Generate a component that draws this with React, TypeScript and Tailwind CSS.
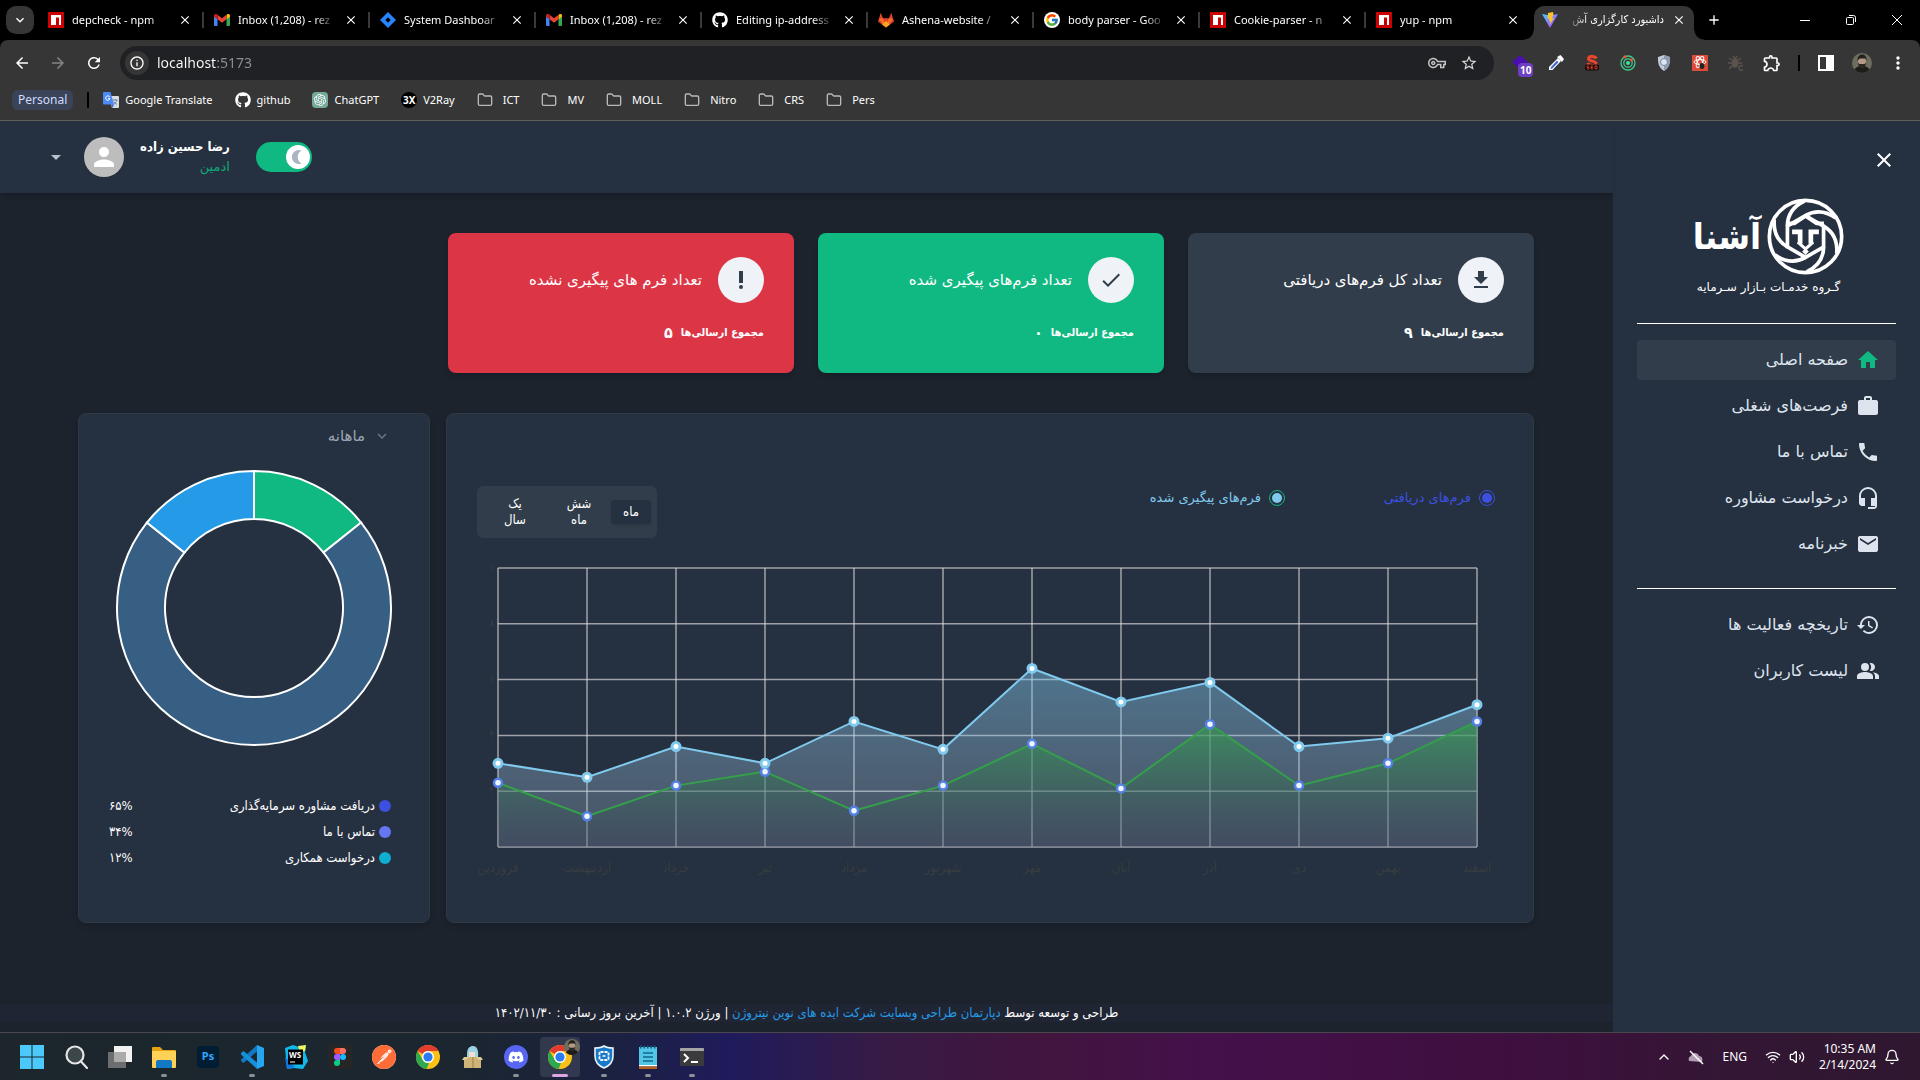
import React from "react";
import {
  MdHome, MdWork, MdPhone, MdHeadsetMic, MdEmail, MdHistory, MdPeopleAlt, MdDownload, MdCheck, MdPriorityHigh,
  MdPerson, MdClose, MdArrowDropDown, MdArrowBack, MdArrowForward, MdRefresh, MdInfoOutline, MdStarOutline,
  MdMoreVert, MdAdd, MdKeyboardArrowDown, MdOutlineExtension, MdOutlineVpnKey,
} from "react-icons/md";
import { FcGoogle } from "react-icons/fc";
import { FaGithub, FaDiscord } from "react-icons/fa6";
import { SiPostman, SiOpenai } from "react-icons/si";
import { Bell, ChevronUp, Folder, Volume2, Wifi } from "lucide-react";

const LATIN = "font-['Noto_Sans','Open_Sans',sans-serif]";
const PERSIAN = "font-['DejaVu_Sans_Condensed','DejaVu_Sans',sans-serif]";
const PERSIAN_WIDE = "font-['DejaVu_Sans',sans-serif]";

/* ---------- brand icons ---------- */

const Npm = () => (
  <svg viewBox="0 0 16 16" className="size-4">
    <rect width="16" height="16" fill="#cb0000" />
    <path d="M3 3h10v10h-2V5.500H8V13H3z" fill="#fff" />
  </svg>
);
const Gmail = () => (
  <svg viewBox="0 0 16 12" className="w-4">
    <path d="M0 1.500V11a1 1 0 0 0 1 1h2.500V4.800z" fill="#4285f4" />
    <path d="M12.500 12H15a1 1 0 0 0 1-1V1.500l-3.500 3.300z" fill="#34a853" />
    <path d="M12.500 1v4.300L16 2.700V1.500C16 .1 14.400-.5 13.300.3z" fill="#fbbc04" />
    <path d="M3.500 5.300V.7L8 4.200 12.500.7v4.600L8 8.700z" fill="#ea4335" />
    <path d="M0 1.500v1.200l3.500 2.600V.6L2.700.3C1.600-.5 0 .1 0 1.500z" fill="#c5221f" />
  </svg>
);
const Jira = () => (
  <svg viewBox="0 0 16 16" className="size-4">
    <path d="M8 0l8 8-8 8-8-8z" fill="#2684ff" />
    <path d="M8 5.300L10.700 8 8 10.700 5.300 8z" fill="#000" />
  </svg>
);
const Gitlab = () => (
  <svg viewBox="0 0 16 16" className="size-4">
    <path d="M8 15.500L0 9.500 2.800.8 5 6.200h6L13.200.8 16 9.500z" fill="#e24329" />
    <path d="M8 15.500L1 7l4-.8z" fill="#fc6d26" />
    <path d="M8 15.500L15 7l-4-.8z" fill="#fc6d26" />
    <path d="M8 15.500l-4-3.200L8 9l4 3.300z" fill="#fca326" />
  </svg>
);
const Vite = () => (
  <svg viewBox="0 0 16 16" className="size-4">
    <defs>
      <linearGradient id="vite" x1="0" y1="0" x2="1" y2="1">
        <stop offset="0" stopColor="#41d1ff" />
        <stop offset="1" stopColor="#bd34fe" />
      </linearGradient>
    </defs>
    <path d="M0 2l8 14 8-14-8 1.500z" fill="url(#vite)" />
    <path d="M11 0L6 1l-.4 6 2-.4L7 9.500l1.400-.4-.8 4L12 6l-2.300.4L11.500 3z" fill="#ffc524" />
  </svg>
);
const Translate = () => (
  <svg viewBox="0 0 16 16" className="size-4">
    <path d="M6 4h9a1 1 0 0 1 1 1v10a1 1 0 0 1-1 1H9z" fill="#d9dce1" />
    <path d="M9.500 8h5M12 7v1M14 8c-.5 2-2 3.500-3.500 4.300M10.500 9.500c1 1.500 2 2.300 3.500 3" stroke="#607d9b" strokeWidth=".9" fill="none" />
    <path d="M1 0h6.500L11 12.500H1a1 1 0 0 1-1-1V1a1 1 0 0 1 1-1z" fill="#4c8bf5" />
    <path d="M6.800 5A2.200 2.200 0 1 0 7 6.600H5" stroke="#fff" fill="none" />
    <path d="M8 12.500h3L9.500 16z" fill="#3367d6" />
  </svg>
);
const ChatGpt = () => (
  <span className="flex size-4 items-center justify-center rounded-sm bg-[#75a99c]">
    <SiOpenai className="size-3 text-white" />
  </span>
);
const V2Ray = () => (
  <span className="flex size-4 items-center justify-center rounded-full bg-black text-[10px] font-bold text-white">3X</span>
);

/* ---------- browser window ---------- */

const tabs: { title: string; icon: React.ReactNode }[] = [
  { title: "depcheck - npm", icon: <Npm /> },
  { title: "Inbox (1,208) - rez", icon: <Gmail /> },
  { title: "System Dashboar", icon: <Jira /> },
  { title: "Inbox (1,208) - rez", icon: <Gmail /> },
  { title: "Editing ip-address", icon: <FaGithub className="size-4 text-white" /> },
  { title: "Ashena-website /", icon: <Gitlab /> },
  { title: "body parser - Goo", icon: <span className="rounded-full bg-white p-px"><FcGoogle className="size-3.5" /></span> },
  { title: "Cookie-parser - n", icon: <Npm /> },
  { title: "yup - npm", icon: <Npm /> },
];

function TabStrip() {
  return (
    <div className="flex h-10 items-center bg-black text-white">
      <button aria-label="Search tabs" className="ml-1.5 mr-1 flex size-7 shrink-0 items-center justify-center rounded-[10px] bg-[#363636]">
        <MdKeyboardArrowDown className="size-4" />
      </button>
      {tabs.map((t, i) => (
        <div key={i} className="flex w-[166px] min-w-0 items-center pl-2.5">
          <span className="flex size-4 shrink-0 items-center justify-center">{t.icon}</span>
          <span className="ml-2 w-[98px] overflow-hidden whitespace-nowrap text-[11px] leading-4 [mask-image:linear-gradient(to_right,#000_78%,transparent)]">{t.title}</span>
          <button aria-label="Close tab" className="ml-auto mr-2.5 shrink-0">
            <MdClose className="size-3.5" />
          </button>
          <span className={i < 8 ? "h-4 w-0.5 shrink-0 bg-[#3a3a3a]" : "h-4 w-0.5 shrink-0"} />
        </div>
      ))}
      <div className="relative ml-0.5 flex h-[34px] w-40 items-center self-end rounded-t-[10px] bg-[#363636] px-2 pb-1.5">
        <span className="absolute -left-2.5 bottom-0 size-2.5 bg-[radial-gradient(circle_at_0_0,transparent_9px,#363636_10px)]" />
        <span className="absolute -right-2.5 bottom-0 size-2.5 bg-[radial-gradient(circle_at_100%_0,transparent_9px,#363636_10px)]" />
        <Vite />
        <span dir="rtl" className={`ml-2 w-[98px] overflow-hidden whitespace-nowrap text-[11px] leading-4 ${PERSIAN} [mask-image:linear-gradient(to_left,#000_78%,transparent)]`}>
          داشبورد کارگزاری آش
        </span>
        <button aria-label="Close tab" className="ml-auto">
          <MdClose className="size-3.5" />
        </button>
      </div>
      <button aria-label="New tab" className="ml-3">
        <MdAdd className="size-4" />
      </button>
      <div className="ml-auto flex items-center">
        <button aria-label="Minimize" className="flex w-[46px] justify-center"><span className="h-px w-2.5 bg-white" /></button>
        <button aria-label="Restore" className="flex w-[46px] justify-center">
          <svg viewBox="0 0 12 12" className="size-3" fill="none" stroke="#fff">
            <rect x="1.500" y="3.500" width="7" height="7" rx="1" />
            <path d="M4 1.500h4.500a2 2 0 0 1 2 2V8" />
          </svg>
        </button>
        <button aria-label="Close window" className="flex w-[46px] justify-center">
          <svg viewBox="0 0 12 12" className="size-3" stroke="#fff"><path d="M1 1l10 10M11 1L1 11" /></svg>
        </button>
      </div>
    </div>
  );
}

const extensions: React.ReactNode[] = [
  <span className="relative block size-4">
    <svg viewBox="0 0 16 16" className="size-4"><path d="M8 0l8 7-8 7-8-7z" fill="#4a0fae" /></svg>
    <span className="absolute left-1.5 top-2 rounded bg-[#6d3fc4] px-0.5 text-[10px] font-bold leading-[14px] text-white">10</span>
  </span>,
  <svg viewBox="0 0 16 16" className="size-4">
    <path d="M10 3l3 3-8.500 9H1v-3z" fill="#fff" />
    <path d="M9 5.500L3 12l-.5 2 1.500-.3 6.500-6.500z" fill="#4169d8" />
    <path d="M9 2l5 5 2-3-3.500-4z" fill="#fff" />
  </svg>,
  <svg viewBox="0 0 16 16" className="size-4">
    <path d="M12.500 3.500C11 1 5 .5 4.500 3.500c-.3 3 7.500 2 7.500 5S5 11 3.500 8" stroke="#e8452c" strokeWidth="3" fill="none" />
    <rect y="9.500" x="1" width="14" height="6" rx="2" fill="#120b09" />
    <path d="M5 11H3v1.500h2V14H3M9 11H7v3h2M7 12.500h2M11 11h2v3h-2z" stroke="#e8452c" strokeWidth=".8" fill="none" />
  </svg>,
  <svg viewBox="0 0 16 16" className="size-4" fill="none">
    <circle cx="8" cy="8" r="7" stroke="#3fc98d" strokeWidth="1.300" />
    <circle cx="8" cy="8" r="4.200" stroke="#3fc98d" strokeWidth="1.300" />
    <circle cx="8" cy="8" r="2" fill="#3fe0a0" />
    <circle cx="5" cy="1.800" r="1.600" fill="#f0562c" />
    <circle cx="11.500" cy="5" r="1.500" fill="#f0562c" />
  </svg>,
  <svg viewBox="0 0 16 16" className="size-4">
    <path d="M8 0l6 2c.4 6-1 11-6 14C3 13 1.600 8 2 2z" fill="#c3cbd9" />
    <path d="M8 0l6 2c.4 6-1 11-6 14z" fill="#8f9bb3" />
    <circle cx="8" cy="7" r="3.500" fill="#dfe5ef" stroke="#7987a3" />
  </svg>,
  <svg viewBox="0 0 16 16" className="size-4">
    <rect width="16" height="16" fill="#dd4b39" />
    <g fill="none" stroke="#fff">
      <ellipse cx="8" cy="7" rx="6" ry="2.400" />
      <ellipse cx="8" cy="7" rx="6" ry="2.400" transform="rotate(60 8 7)" />
      <ellipse cx="8" cy="7" rx="6" ry="2.400" transform="rotate(120 8 7)" />
    </g>
    <ellipse cx="10" cy="11" rx="2.500" ry="3" fill="#222" />
  </svg>,
  <svg viewBox="0 0 16 16" className="size-4" fill="none" stroke="#5c534d" strokeWidth="1.400">
    <ellipse cx="7" cy="8" rx="2.500" ry="4" fill="#5c534d" />
    <path d="M1 3l4 3M13 3L9 6M0 8h14M1 14l4-4M5 1l2 3 2-3" />
    <path d="M15 11c-3-1.500-4.500.5-4 2.500s3 2.500 4 1" />
  </svg>,
  <MdOutlineExtension className="size-5 text-white" />,
];

const bookmarks: { label: string; icon?: React.ReactNode }[] = [
  { label: "Google Translate", icon: <Translate /> },
  { label: "github", icon: <FaGithub className="size-4 text-white" /> },
  { label: "ChatGPT", icon: <ChatGpt /> },
  { label: "V2Ray", icon: <V2Ray /> },
  { label: "ICT" }, { label: "MV" }, { label: "MOLL" }, { label: "Nitro" }, { label: "CRS" }, { label: "Pers" },
];

function Toolbar() {
  return (
    <div className="bg-black">
      <div className="rounded-t-lg border-b border-[#5f5f5a] bg-[#363636] text-white">
        <div className="flex h-[46px] items-center pl-1 pr-1">
          <button aria-label="Back" className="flex w-9 justify-center"><MdArrowBack className="size-[18px]" /></button>
          <button aria-label="Forward" className="flex w-9 justify-center text-[#858585]"><MdArrowForward className="size-[18px]" /></button>
          <button aria-label="Reload" className="flex w-9 justify-center"><MdRefresh className="size-[18px]" /></button>
          <div className="ml-2 flex h-[34px] flex-1 items-center rounded-full bg-[#202124] pl-[5px] pr-4">
            <span className="flex size-6 items-center justify-center rounded-full bg-[#363636]">
              <MdInfoOutline className="size-4" />
            </span>
            <input
              aria-label="Address"
              defaultValue="localhost:5173"
              className="ml-2 flex-1 bg-[linear-gradient(to_right,#ffffff_60px,#8d9196_60px)] bg-clip-text text-sm text-transparent outline-none"
            />
            <MdOutlineVpnKey className="mr-3.5 size-[18px] text-[#c4c4c4]" />
            <MdStarOutline className="size-[18px] text-[#d8d8d8]" />
          </div>
          <div className="ml-2 flex items-center">
            {extensions.map((e, i) => (
              <span key={i} className="flex w-9 justify-center">{e}</span>
            ))}
            <span className="mx-2 h-4 w-0.5 bg-black" />
            <button aria-label="Side panel" className="flex w-9 justify-center">
              <span className="flex h-4 w-4 justify-end border-2 border-white"><span className="w-1.5 bg-white" /></span>
            </button>
            <span className="flex w-9 justify-center"><PhotoAvatar className="size-5" /></span>
            <button aria-label="Menu" className="flex w-9 justify-center"><MdMoreVert className="size-5" /></button>
          </div>
        </div>
        <div className="flex h-[34px] items-start pl-3 text-[11px]">
          <a href="#personal" className="mt-1 flex h-5 items-center rounded-md bg-[#3b4358] px-1.5 text-xs text-[#cfdcff]">Personal</a>
          <span className="ml-3.5 mt-1.5 h-4 w-0.5 bg-black" />
          <nav className="ml-3.5 mt-1 flex h-5 items-center gap-[22px]">
            {bookmarks.map((b) => (
              <a key={b.label} href="#bookmark" className="flex items-center gap-1.5">
                {b.icon ?? <Folder className="mr-1 size-4 text-[#b9b9b9]" />}
                {b.label}
              </a>
            ))}
          </nav>
        </div>
      </div>
    </div>
  );
}

function PhotoAvatar({ className }: { className: string }) {
  return (
    <svg viewBox="0 0 20 20" className={`rounded-full ${className}`}>
      <rect width="20" height="20" fill="#6f6d60" />
      <path d="M2 20c0-5 3-7 8-7s8 2 8 7z" fill="#1d1c18" />
      <ellipse cx="10" cy="8.500" rx="4" ry="5" fill="#b39a86" />
      <path d="M5.500 8C5 3 8 1.500 10.500 1.500S15 4 14.500 8l-1-2.500h-6z" fill="#24211c" />
      <path d="M6 9.500c.5 5 2 6 4 6s3.500-1 4-6l-1.500 1.500h-5z" fill="#2c2721" />
    </svg>
  );
}

/* ---------- dashboard ---------- */

const blades = [0, 60, 120, 180, 240, 300];

function Logo() {
  return (
    <div className="flex flex-col items-center pl-1 text-white">
      <div className="flex items-center gap-1.5">
        <svg viewBox="0 0 230 230" className="size-[77px]" fill="none" stroke="#fff" strokeWidth="11">
          <circle cx="115" cy="115" r="108" />
          {blades.map((a) => (
            <path key={a} d="M61 150V84C61 52 76 26 112 9" transform={`rotate(${a} 115 115)`} />
          ))}
          <path d="M60 76h22l33-22 33 22h22" />
          <path d="M75 101h24v36M155 101h-24v36" strokeWidth="14" />
          <path d="M92 132l23 20 23-20" strokeWidth="9" />
          <path d="M115 150l10 10-10 10-10-10z" fill="#fff" stroke="none" />
        </svg>
        <span className={`text-[36px] font-bold leading-[48px] ${PERSIAN}`}>آشنا</span>
      </div>
      <p className={`mt-0.5 text-xs leading-5 ${PERSIAN_WIDE}`}>گـروه خدمـات بـازار سـرمایه</p>
    </div>
  );
}

const primaryNav = [
  { label: "صفحه اصلی", Icon: MdHome, active: true },
  { label: "فرصت‌های شغلی", Icon: MdWork },
  { label: "تماس با ما", Icon: MdPhone },
  { label: "درخواست مشاوره", Icon: MdHeadsetMic },
  { label: "خبرنامه", Icon: MdEmail },
];
const secondaryNav = [
  { label: "تاریخچه فعالیت ها", Icon: MdHistory },
  { label: "لیست کاربران", Icon: MdPeopleAlt },
];

function NavList({ items }: { items: { label: string; Icon: React.ComponentType<{ className?: string }>; active?: boolean }[] }) {
  return (
    <ul className={`flex flex-col gap-1.5 ${PERSIAN_WIDE}`}>
      {items.map(({ label, Icon, active }) => (
        <li key={label}>
          <a
            href="#page"
            className={
              active
                ? "flex h-10 items-center gap-2 rounded-sm bg-[#313d4a] px-4 text-base text-[#dee4ee]"
                : "flex h-10 items-center gap-2 rounded-sm px-4 text-base text-[#dee4ee]"
            }
          >
            <Icon className={active ? "size-6 text-[#10b981]" : "size-6"} />
            {label}
          </a>
        </li>
      ))}
    </ul>
  );
}

function Sidebar() {
  return (
    <aside className="w-[307px] shrink-0 bg-[#253040] px-6">
      <div className="flex h-[77px] items-start pt-[27px]">
        <button aria-label="بستن منو" className="text-white"><MdClose className="size-6" /></button>
      </div>
      <Logo />
      <hr className="mb-4 mt-[26px] border-white" />
      <NavList items={primaryNav} />
      <hr className="mb-4 mt-6 border-white" />
      <NavList items={secondaryNav} />
    </aside>
  );
}

function Header() {
  return (
    <header className="z-10 flex h-[72px] items-center justify-end bg-[#253040] pl-11 shadow-md">
      <label className="ml-[26px] flex h-[30px] w-14 cursor-pointer items-center rounded-full bg-[#10b981] px-0.5">
        <input type="checkbox" defaultChecked aria-label="حالت تاریک" className="sr-only" />
        <span className="flex size-6 items-center justify-center rounded-full bg-white">
          <svg viewBox="0 0 16 16" className="size-4"><path d="M11.500 1.500a7 7 0 1 0 0 13 7.500 7.500 0 0 1 0-13z" fill="#aab4c3" /></svg>
        </span>
      </label>
      <div className="ml-4 text-right">
        <p className="text-[13px] font-bold leading-5 text-white">رضا حسین زاده</p>
        <p className={`text-[13px] leading-5 text-[#10a778] ${PERSIAN_WIDE}`}>ادمین</p>
      </div>
      <span className="flex size-10 items-center justify-center rounded-full bg-[#bdbdbd]"><MdPerson className="size-[30px] text-white" /></span>
      <button aria-label="حساب کاربری" className="mr-4 text-[#b8c0cc]"><MdArrowDropDown className="size-6" /></button>
    </header>
  );
}

const stats = [
  { title: "تعداد کل فرم‌های دریافتی", value: "۹", Icon: MdDownload, tone: "bg-[#313d4a]" },
  { title: "تعداد فرم‌های پیگیری شده", value: "۰", Icon: MdCheck, tone: "bg-[#10b981]" },
  { title: "تعداد فرم های پیگیری نشده", value: "۵", Icon: MdPriorityHigh, tone: "bg-[#dc3545]" },
];

function StatCard({ title, value, Icon, tone }: (typeof stats)[number]) {
  return (
    <article className={`h-[140px] rounded-lg px-[30px] pt-6 text-white shadow-md ${tone}`}>
      <div className="flex items-center gap-4">
        <span className="flex size-[46px] items-center justify-center rounded-full bg-[#eff2f7]"><Icon className="size-6 text-[#313d4a]" /></span>
        <h4 className={`text-[15px] ${PERSIAN_WIDE}`}>{title}</h4>
      </div>
      <p className="mt-5 flex items-center gap-2 text-[11px] font-bold leading-5">
        مجموع ارسالی‌ها <span className="text-base leading-5">{value}</span>
      </p>
    </article>
  );
}

const months = ["فروردین", "اردیبهشت", "خرداد", "تیر", "مرداد", "شهریور", "مهر", "آبان", "آذر", "دی", "بهمن", "اسفند"];
const received = [23, 11, 22, 27, 13, 22, 37, 21, 44, 22, 30, 45];
const followed = [30, 25, 36, 30, 45, 35, 64, 52, 59, 36, 39, 51];
const yTicks = [
  { v: 0, t: "۰" }, { v: 20, t: "۲۰" }, { v: 40, t: "۴۰" }, { v: 60, t: "۶۰" }, { v: 80, t: "۸۰" }, { v: 100, t: "۱۰۰" },
];
const px = (i: number) => 51 + i * 89;
const py = (v: number) => 299 - v * 2.79;
const line = (d: number[]) => d.map((v, i) => `${px(i)},${py(v)}`).join(" ");

function AreaChart() {
  const area = (d: number[]) => `${px(0)},${py(0)} ${line(d)} ${px(11)},${py(0)}`;
  return (
    <svg viewBox="0 0 1086 340" className="w-full" role="img" aria-label="نمودار فرم‌ها">
      <defs>
        <linearGradient id="followedFill" x1="0" y1="0" x2="0" y2="1">
          <stop offset="0" stopColor="#80caee" stopOpacity=".45" />
          <stop offset="1" stopColor="#b0bcd4" stopOpacity=".25" />
        </linearGradient>
        <linearGradient id="receivedFill" x1="0" y1="0" x2="0" y2="1">
          <stop offset="0" stopColor="#34a04a" stopOpacity=".65" />
          <stop offset="1" stopColor="#343c58" stopOpacity=".3" />
        </linearGradient>
      </defs>
      {yTicks.map(({ v, t }) => (
        <text key={v} x="42" y={py(v) + 3} fontSize="11" fill="#373d3f" textAnchor="start" direction="ltr">{t}</text>
      ))}
      <g stroke="#e0e0e0" strokeOpacity=".65" strokeWidth="1.500">
        {yTicks.map(({ v }) => <line key={v} x1={px(0)} x2={px(11)} y1={py(v)} y2={py(v)} />)}
        {months.map((m, i) => <line key={m} x1={px(i)} x2={px(i)} y1={py(0)} y2={py(100)} />)}
      </g>
      <polygon points={area(followed)} fill="url(#followedFill)" />
      <polyline points={line(followed)} fill="none" stroke="#80caee" strokeWidth="2" />
      <polygon points={area(received)} fill="url(#receivedFill)" />
      <polyline points={line(received)} fill="none" stroke="#34a04a" strokeWidth="2" />
      {received.map((v, i) => <circle key={i} cx={px(i)} cy={py(v)} r="4" fill="#f0f6ff" stroke="#5480e4" strokeWidth="2.500" />)}
      {followed.map((v, i) => <circle key={i} cx={px(i)} cy={py(v)} r="4" fill="#fff" stroke="#80caee" strokeWidth="3" />)}
      {months.map((m, i) => (
        <text key={m} x={px(i)} y="324" fontSize="13" fill="#373d3f" textAnchor="middle" direction="rtl">{m}</text>
      ))}
    </svg>
  );
}

function ChartCard() {
  return (
    <section className="flex min-w-0 flex-1 flex-col rounded-lg border border-[#2e3a47] bg-[#253040] shadow-md">
      <div className={`flex items-start pl-[30px] pr-[38px] pt-[72px] text-[13px] leading-6 ${PERSIAN_WIDE}`}>
        <div className="flex w-[210px] items-center gap-2">
          <span className="flex size-4 items-center justify-center rounded-full border border-[#3c50e0]"><span className="size-2.5 rounded-full bg-[#3c50e0]" /></span>
          <p className="text-[#3c50e0]">فرم‌های دریافتی</p>
        </div>
        <div className="flex items-center gap-2">
          <span className="flex size-4 items-center justify-center rounded-full border border-[#10b981]"><span className="size-2.5 rounded-full bg-[#80caee]" /></span>
          <p className="text-[#80caee]">فرم‌های پیگیری شده</p>
        </div>
        <div className={`mr-auto flex h-[52px] w-[180px] items-center rounded-md bg-[#313d4a] px-1.5 text-[13px] leading-4 text-white ${PERSIAN}`}>
          <button className="h-6 w-10 rounded bg-[#253040] shadow">ماه</button>
          <button className="w-16 px-4">شش ماه</button>
          <button className="w-16 px-4">یک سال</button>
        </div>
      </div>
      <div className="mt-2.5"><AreaChart /></div>
    </section>
  );
}

const slices = [
  { from: 0, to: 1, fill: "#10b981" },
  { from: 1, to: 6, fill: "#375e83" },
  { from: 6, to: 7, fill: "#259ae6" },
];
function slicePath(from: number, to: number) {
  const pt = (k: number, r: number) => {
    const a = (k / 7) * Math.PI * 2;
    return `${140 + r * Math.sin(a)} ${140 - r * Math.cos(a)}`;
  };
  const big = to - from > 3.5 ? 1 : 0;
  return `M${pt(from, 137)}A137 137 0 ${big} 1 ${pt(to, 137)}L${pt(to, 89)}A89 89 0 ${big} 0 ${pt(from, 89)}Z`;
}

const shares = [
  { label: "دریافت مشاوره سرمایه‌گذاری", value: "۶۵%", dot: "bg-[#3c50e0]" },
  { label: "تماس با ما", value: "۳۴%", dot: "bg-[#6577f3]" },
  { label: "درخواست همکاری", value: "۱۲%", dot: "bg-[#0fadcf]" },
];

function DonutCard() {
  return (
    <section className="w-[352px] shrink-0 rounded-lg border border-[#2e3a47] bg-[#253040] shadow-md">
      <div className="flex h-11 items-center gap-2 pr-[38px] text-[#9ca5b1]">
        <MdKeyboardArrowDown className="size-[18px] text-[#6b7685]" />
        <select aria-label="بازه" className={`appearance-none bg-transparent text-[15px] leading-5 outline-none ${PERSIAN_WIDE}`}>
          <option>ماهانه</option>
        </select>
      </div>
      <div className="mt-2.5 flex justify-center">
        <svg viewBox="0 0 280 280" className="size-[280px] shrink-0" role="img" aria-label="سهم فرم‌ها">
          {slices.map((s) => <path key={s.from} d={slicePath(s.from, s.to)} fill={s.fill} stroke="#fff" strokeWidth="2" />)}
        </svg>
      </div>
      <ul className="mt-12 flex flex-col gap-1.5 pl-[30px] pr-[38px] text-[13px] leading-5 text-white">
        {shares.map((s) => (
          <li key={s.label} className="flex items-center gap-1">
            <span className={`size-3 rounded-full ${s.dot}`} />
            <span>{s.label}</span>
            <span className="mr-auto">{s.value}</span>
          </li>
        ))}
      </ul>
    </section>
  );
}

/* ---------- taskbar ---------- */

const Chrome = () => (
  <svg viewBox="0 0 24 24" className="size-6">
    <circle cx="12" cy="12" r="12" fill="#fbc116" />
    <path d="M12 0a12 12 0 0 1 10.400 6H12a6 6 0 0 0-5.200 3L1.600 6A12 12 0 0 1 12 0z" fill="#e33b2e" />
    <path d="M1.600 6l5.200 9A6 6 0 0 0 13 18l-2.500 6A12 12 0 0 1 1.600 6z" fill="#2da94f" />
    <circle cx="12" cy="12" r="6" fill="#fff" />
    <circle cx="12" cy="12" r="4.600" fill="#2b7bf0" />
  </svg>
);

const apps: { name: string; run?: boolean; active?: boolean; icon: React.ReactNode }[] = [
  { name: "Start", icon: <svg viewBox="0 0 24 24" className="size-6"><path d="M0 0h11.500v11.500H0zM12.500 0H24v11.500H12.500zM0 12.500h11.500V24H0zM12.500 12.500H24V24H12.500z" fill="#4cc9fb" /></svg> },
  { name: "Search", icon: <svg viewBox="0 0 24 24" className="size-6" fill="none" stroke="#e4e6e8" strokeWidth="2.200"><circle cx="11" cy="10" r="8.500" fill="#3d464b" /><path d="M17 16.500l6 6.500" strokeLinecap="round" /></svg> },
  { name: "Task view", icon: <svg viewBox="0 0 24 24" className="size-6"><rect x="6" y="1" width="18" height="16" fill="#f2f2f2" /><rect y="7" width="18" height="16" fill="#777" fillOpacity=".9" /><rect x="6" y="7" width="12" height="10" fill="#ababab" /></svg> },
  { name: "Explorer", run: true, icon: <svg viewBox="0 0 24 24" className="size-6"><path d="M0 3a1 1 0 0 1 1-1h7l3 3h12a1 1 0 0 1 1 1v16H0z" fill="#e6a313" /><rect y="6" width="24" height="17" rx="1" fill="#ffd257" /><path d="M4 23v-6a2 2 0 0 1 2-2h12a2 2 0 0 1 2 2v6z" fill="#1277c4" /></svg> },
  { name: "Photoshop", icon: <span className="flex size-[22px] items-center justify-center rounded bg-[#001d34] text-[11px] font-bold text-[#31a8ff]">Ps</span> },
  { name: "VS Code", run: true, icon: <svg viewBox="0 0 24 24" className="size-6"><path d="M17 0l7 3v18l-7 3z" fill="#27a6f0" /><path d="M17 0v6.500L3.500 18 1 16v-1.500z" fill="#0f78c0" /><path d="M17 24v-6.500L3.500 6 1 8v1.500z" fill="#1590dc" /></svg> },
  { name: "WebStorm", icon: <svg viewBox="0 0 24 24" className="size-6"><path d="M1 3l8-3 6 2 7-2-1 7 3 9-5 8-9-1-7 1z" fill="#13b8e8" /><path d="M14 1l8-1-1 6-5 1z" fill="#f6f25b" /><path d="M1 12l2 12 8-2z" fill="#1276e0" /><rect x="4" y="4.500" width="15" height="15" fill="#000" /><text x="5" y="12.500" fontSize="8" fontWeight="700" fill="#fff">WS</text><path d="M6 17h5" stroke="#fff" /></svg> },
  { name: "Figma", icon: <svg viewBox="0 0 24 24" className="size-6"><rect width="24" height="24" rx="3" fill="#262626" /><path d="M12 3H9a3 3 0 0 0 0 6h3z" fill="#f24e1e" /><path d="M12 3h3a3 3 0 0 1 0 6h-3z" fill="#ff7262" /><path d="M12 9H9a3 3 0 0 0 0 6h3z" fill="#a259ff" /><circle cx="15" cy="12" r="3" fill="#1abcfe" /><path d="M12 15H9a3 3 0 1 0 3 3z" fill="#0acf83" /></svg> },
  { name: "Postman", icon: <span className="flex size-6 items-center justify-center rounded-full bg-white"><SiPostman className="size-6 text-[#ff6c37]" /></span> },
  { name: "Chrome", icon: <Chrome /> },
  { name: "Box app", icon: <svg viewBox="0 0 24 24" className="size-6"><path d="M7 9c0-6 3-8 6-8s6 3 5 11H7z" fill="#9bd3e3" /><path d="M9 7h6v5H9z" fill="#f3ddd3" /><path d="M4 12h17v11H4z" fill="#cfb47a" /><path d="M4 12l-2 3h4l3-3zM21 12l2 3h-4l-3-3z" fill="#e2cb94" /><path d="M12 12h2v11h-2z" fill="#b6995e" /></svg> },
  { name: "Discord", run: true, icon: <span className="flex size-6 items-center justify-center rounded-full bg-[#5865f2]"><FaDiscord className="size-4 text-white" /></span> },
  { name: "Chrome profile", run: true, active: true, icon: <span className="relative"><Chrome /><PhotoAvatar className="absolute -right-2 -top-1.5 size-4" /></span> },
  { name: "Shield", run: true, icon: <svg viewBox="0 0 24 24" className="size-6"><path d="M12 1c3 2 6 2 9 2v8c0 6-4 10-9 12-5-2-9-6-9-12V3c3 0 6 0 9-2z" fill="#1979c9" stroke="#e9f3fb" strokeWidth="1.600" /><rect x="7.500" y="7" width="9" height="8" rx="1" fill="none" stroke="#fff" strokeWidth="1.800" strokeDasharray="3 1" /><path d="M10.500 11h3" stroke="#fff" strokeWidth="1.500" /></svg> },
  { name: "Notepad", run: true, icon: <svg viewBox="0 0 24 24" className="size-6"><rect x="3" y="2" width="18" height="19" fill="#52c6e6" /><path d="M4 2h16" stroke="#0f5d7d" strokeWidth="3" strokeDasharray="1.500 2" /><path d="M7 8h10M7 12h10M7 16h10" stroke="#11698f" strokeWidth="1.500" /><path d="M3 20h18v1.500H3z" fill="#fff" /><path d="M3 21.500h18V24H3z" fill="#b8611f" /></svg> },
  { name: "Terminal", run: true, icon: <svg viewBox="0 0 24 24" className="size-6"><rect y="3" width="24" height="18" rx="1" fill="#3b3b3d" /><path d="M0 4a1 1 0 0 1 1-1h22a1 1 0 0 1 1 1v2H0z" fill="#a4a4a6" /><path d="M4 9l4 4-4 4" stroke="#fff" strokeWidth="2" fill="none" /><path d="M11 17h7" stroke="#fff" strokeWidth="2" /></svg> },
];

function Taskbar() {
  return (
    <footer className="flex h-12 shrink-0 items-center border-t border-[#4b474f] bg-[linear-gradient(to_right,#1c262b_0%,#1b2630_24%,#1b2140_32%,#1f1b5c_38%,#371b45_46%,#41153d_54%,#45104b_63%,#3f0f3f_78%,#331634_90%,#2f1730_100%)] pl-2.5 pr-5 text-white">
      {apps.map((a) => (
        <button key={a.name} aria-label={a.name} className="flex w-11 justify-center">
          <span className={a.active ? "relative flex size-10 items-center justify-center rounded bg-white/10" : "relative flex size-10 items-center justify-center"}>
            {a.icon}
            {a.run && (
              <span className={a.active ? "absolute bottom-0 h-[3px] w-4 rounded-full bg-[#dba4e6]" : "absolute bottom-0 h-[3px] w-1.5 rounded-full bg-[#8b9096]"} />
            )}
          </span>
        </button>
      ))}
      <div className="ml-auto flex items-center text-xs">
        <ChevronUp className="size-4" />
        <svg viewBox="0 0 16 16" className="ml-4 size-4"><path d="M1 12c-1-3 0-4 2-5 1-4 7-4 8 0 3 0 4 3 3 6z" fill="#b19db2" /><path d="M2 2l13 13" stroke="#fff" strokeWidth="1.400" /></svg>
        <span className="ml-[18px]">ENG</span>
        <Wifi className="ml-[18px] size-4" />
        <Volume2 className="ml-2 size-4" />
        <p className="ml-3.5 text-right leading-4">10:35 AM<br />2/14/2024</p>
        <Bell className="ml-2 size-4" />
      </div>
    </footer>
  );
}

export default function App() {
  return (
    <div className={`flex min-h-screen flex-col bg-[#1c232d] ${LATIN}`}>
      <TabStrip />
      <Toolbar />
      <div dir="rtl" className={`flex flex-1 ${PERSIAN}`}>
        <Sidebar />
        <div className="flex min-w-0 flex-1 flex-col">
          <Header />
          <main className="pl-[78px] pr-[79px] pt-10">
            <div className="grid grid-cols-4 gap-6">
              {stats.map((s) => <StatCard key={s.title} {...s} />)}
            </div>
            <div className="mt-10 flex min-h-[510px] gap-4">
              <ChartCard />
              <DonutCard />
            </div>
          </main>
          <p className="mb-2.5 mt-auto bg-[#1f2533] text-center text-[13px] leading-[18px] text-white">
            طراحی و توسعه توسط <a href="#team" className="text-[#259ae6]">دپارتمان طراحی وبسایت شرکت ایده های نوین نیتروژن</a> | ورژن ۱.۰.۲ | آخرین بروز رسانی : ۱۴۰۲/۱۱/۳۰
          </p>
        </div>
      </div>
      <Taskbar />
    </div>
  );
}
